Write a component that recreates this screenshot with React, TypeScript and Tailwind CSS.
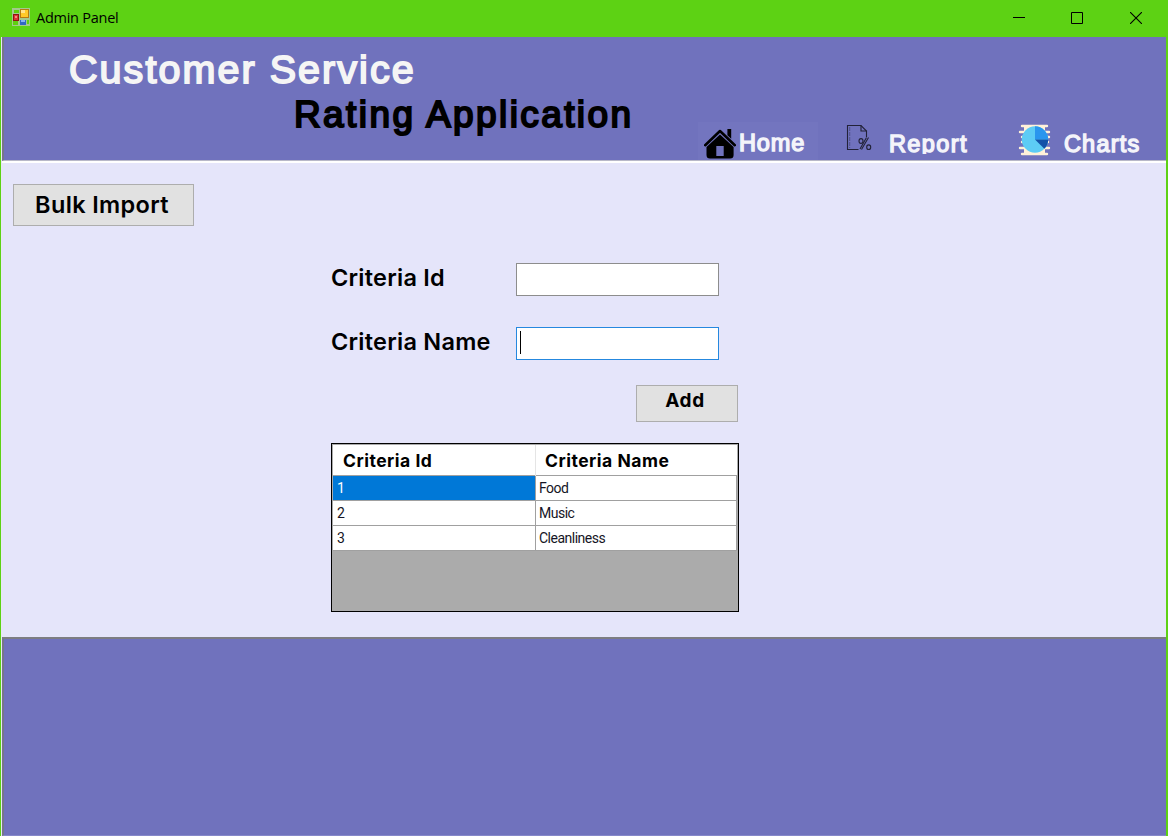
import React from "react";

const rounded = "font-['Liberation_Sans',Arial,sans-serif] whitespace-nowrap leading-none";

function FormIcon() {
  return (
    <svg width="18" height="18" viewBox="0 0 18 18" className="shrink-0">
      <rect width="18" height="18" fill="#a3c98c" />
      <rect x="2" y="2" width="5" height="3" fill="#5fd010" />
      <rect x="1" y="13" width="5" height="4" fill="#5fd010" />
      <rect x="15" y="12" width="2" height="4" fill="#5fd010" />
      <rect x="8" y="1" width="9" height="9" fill="#b87a10" />
      <rect x="9" y="2" width="7" height="7" fill="#ffc928" />
      <rect x="9" y="2" width="4" height="3" fill="#ffe38a" />
      <rect x="1" y="6" width="6" height="7" fill="#8f1414" />
      <rect x="2" y="7" width="4" height="5" fill="#dd3434" />
      <rect x="3" y="8" width="2" height="2" fill="#f58a80" />
      <rect x="8" y="12" width="6" height="5" fill="#3167c5" />
      <rect x="9" y="12" width="4" height="2" fill="#84b2f5" />
    </svg>
  );
}

function HomeIcon() {
  return (
    <svg width="32" height="31" viewBox="0 0 32 31" className="mt-[6px] ml-[6px] shrink-0">
      <path d="M1.200 17.200 16 3l14.800 14.200" fill="none" stroke="#000" strokeWidth="2.600" strokeLinecap="round" strokeLinejoin="round" />
      <path d="M23.400 1h3.800v9.800l-3.800-3.600z" fill="#000" />
      <path d="M16 6.400 29.600 19v8a3.500 3.500 0 0 1-3.500 3.500H6A3.500 3.500 0 0 1 2.500 27v-8z" fill="#000" />
      <rect x="12.300" y="18" width="7.400" height="10" fill="#7072bd" />
    </svg>
  );
}

function ReportIcon() {
  return (
    <svg width="26" height="28" viewBox="0 0 26 28" className="mt-[2px] shrink-0" fill="none" stroke="#222238" strokeWidth="1.100">
      <path d="M12.500 25.500H1.500V1.500H15l5.500 5.500v6" />
      <path d="M15 1.500V7h5.500" />
      <path d="M3.700 3v21" strokeDasharray="4 1" strokeWidth=".4" />
      <path d="m22.500 13.500-7 12M20.500 13.500l-6.500 11.500" />
      <ellipse cx="15" cy="17" rx="2" ry="2.400" />
      <ellipse cx="22.700" cy="23.200" rx="2" ry="2.300" />
    </svg>
  );
}

function ChartIcon() {
  return (
    <svg width="33" height="32" viewBox="0 0 33 32" className="mt-[2px] shrink-0">
      <g stroke="#fff1d9" strokeWidth="2.400" strokeLinecap="round">
        <path d="M4 2h25M2 8h29M4 13h27M4 18h26M2 24h29M4 30h25" />
      </g>
      <path d="M6 3h21v26H6z" fill="#fff1d9" />
      <circle cx="17" cy="15.500" r="13.200" fill="#5dccf5" />
      <path d="M17 15.500V2.300A13.200 13.200 0 0 1 30.200 15.500z" fill="#2a96ee" />
      <path d="M17 15.500h13.200a13.200 13.200 0 0 1-3.900 9.300z" fill="#1252a8" />
    </svg>
  );
}

function TitleBar() {
  return (
    <div className="flex h-[37px] shrink-0 items-start bg-[#5dd214] pt-2 pl-3">
      <FormIcon />
      <span className="ml-[6px] flex-1 font-['Open_Sans','Noto_Sans',sans-serif] text-[14.500px] leading-[20px] tracking-[-0.250px] text-black">Admin Panel</span>
      <div className="mr-[26px] flex items-start pt-1">
        <svg width="12" height="12" viewBox="0 0 12 12" className="mr-[46px]"><path d="M0 5.500h12" stroke="#000" /></svg>
        <svg width="12" height="12" viewBox="0 0 12 12" className="mr-[47px]"><path d="M.5.500h11v11H.5z" fill="none" stroke="#000" /></svg>
        <svg width="12" height="12" viewBox="0 0 12 12"><path d="m0 0 12 12M12 0 0 12" stroke="#000" strokeWidth="1.100" /></svg>
      </div>
    </div>
  );
}

const navText = rounded + " text-[23.500px] text-[#f4f4fa] [-webkit-text-stroke:1.400px_#f4f4fa]";

function Header() {
  return (
    <header className="h-[124px] shrink-0 overflow-hidden border-b border-[#b8b8c8] border-l-2 border-l-[#77778a] bg-[#7072bd]">
      <h1 className={rounded + " mt-[13px] ml-[65px] h-[47px] text-[39.500px] tracking-[2.050px] text-[#f5f5f5] [-webkit-text-stroke:1.800px_#f5f5f5]"}>Customer Service</h1>
      <div className="flex">
        <h2 className={rounded + " -mt-[1px] w-[407px] pl-[290px] text-[37px] tracking-[2.400px] text-black [-webkit-text-stroke:2px_#000]"}>Rating Application</h2>
        <nav className="mt-[25px] flex">
          <div className="ml-[287px] flex h-[38px] w-[120px] bg-[#7375bf]">
            <HomeIcon />
            <span className={navText + " mt-[10px] ml-[3px] tracking-[0.900px]"}>Home</span>
          </div>
          <div className="ml-[28px] flex">
            <ReportIcon />
            <span className={navText + " mt-[11px] ml-[17px] h-[21px] overflow-hidden tracking-[1.400px]"}>Report</span>
          </div>
          <div className="flex pl-[50px]">
            <ChartIcon />
            <span className={navText + " mt-[11px] ml-[13px] tracking-[1.200px]"}>Charts</span>
          </div>
        </nav>
      </div>
    </header>
  );
}

function Field({ label, focused = false }: { label: string; focused?: boolean }) {
  return (
    <label className="flex h-[33px]">
      <span className="w-[185px] whitespace-nowrap pt-[2px] font-[Inter,sans-serif] text-[23.500px] leading-[26px] font-semibold tracking-[0.250px] text-black">{label}</span>
      <span className={"flex h-[33px] w-[203px] border bg-white " + (focused ? "border-[#2588df]" : "border-[#8d8d8d]")}>
        {focused && <span className="mt-[3px] ml-[3px] h-[23px] w-px bg-black" />}
      </span>
    </label>
  );
}

const rows = [["1", "Food"], ["2", "Music"], ["3", "Cleanliness"]];

function Grid() {
  return (
    <div className="mt-[21px] h-[169px] w-[408px] border border-black bg-[#ababab] pt-px pl-px">
      <div className="grid h-[31px] w-[404px] grid-cols-[203px_201px] border-b border-[#a0a0a0] bg-white font-[Inter,sans-serif] text-[17.500px] leading-[32px] font-bold tracking-[0.500px] text-black">
        <span className="border-r border-[#e5e5e5] pl-[10px]">Criteria Id</span>
        <span className="pl-[9px]">Criteria Name</span>
      </div>
      {rows.map(([id, name]) => (
        <div key={id} className="grid h-[25px] w-[404px] grid-cols-[203px_200px] border-r border-b border-[#a0a0a0] bg-white font-['Roboto',sans-serif] text-[14px] leading-[24px] tracking-[-0.500px] text-[#151525]">
          <span className={"border-r border-[#a0a0a0] pl-1 " + (id === "1" ? "bg-[#0078d7] text-white" : "")}>{id}</span>
          <span className="pl-[3px]">{name}</span>
        </div>
      ))}
    </div>
  );
}

export default function App() {
  return (
    <div className="flex h-[836px] w-[1168px] flex-col overflow-hidden bg-[#5dd214]">
      <TitleBar />
      <div className="mr-[1px] ml-px flex flex-1 flex-col border-r border-l border-r-[#5dd214] border-l-[#e8e8f4] bg-[#e5e5fa]">
        <Header />
        <main className="flex h-[476px] shrink-0 border-t-2 border-white">
          <button className="mt-[21px] ml-[11px] flex h-[42px] w-[181px] justify-center border border-[#adadad] bg-[#e1e1e1] pt-[6px] pr-[3px] font-[Inter,sans-serif] text-[23.500px] leading-[28px] font-semibold tracking-[0.350px] whitespace-nowrap text-black">Bulk Import</button>
          <div className="mt-[100px] ml-[137px] flex w-[408px] flex-col">
            <Field label="Criteria Id" />
            <div className="h-[31px]" />
            <Field label="Criteria Name" focused />
            <button className="mt-[25px] mr-[1px] h-[37px] w-[102px] self-end border border-[#adadad] bg-[#e1e1e1] pr-1 pb-[5px] font-[Inter,sans-serif] text-[19px] leading-[24px] font-bold tracking-[0.600px] text-black">Add</button>
            <Grid />
          </div>
        </main>
        <footer className="flex-1 border-t-2 border-b border-l-2 border-t-[#7d7d82] border-b-[#8688ca] border-l-[#77778a] bg-[#7072bd]" />
      </div>
    </div>
  );
}
